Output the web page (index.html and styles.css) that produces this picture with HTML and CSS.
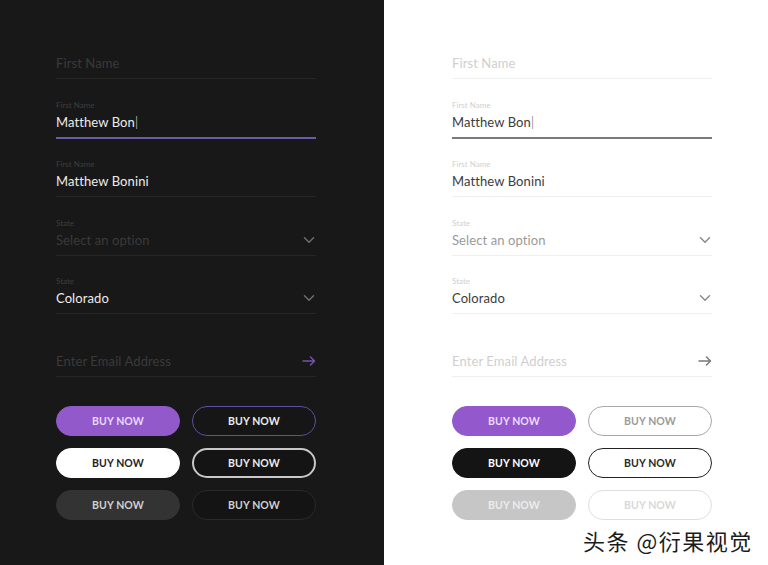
FILE: index.html
```html
<!DOCTYPE html>
<html>
<head>
<meta charset="utf-8">
<link rel="stylesheet" href="styles.css">
</head>
<body>
<div class="page">
  <section class="panel dark">
    <div class="form">
      <div class="field"><div class="label"></div><div class="value placeholder">First Name</div></div>
      <div class="field focus"><div class="label">First Name</div><div class="value">Matthew Bon<span class="caret">|</span></div></div>
      <div class="field"><div class="label">First Name</div><div class="value">Matthew Bonini</div></div>
      <div class="field"><div class="label">State</div><div class="value placeholder dim">Select an option<svg class="icon" viewBox="0 0 12 8"><path d="M1.5 1.8 6 6.2 10.5 1.8"/></svg></div></div>
      <div class="field"><div class="label">State</div><div class="value">Colorado<svg class="icon" viewBox="0 0 12 8"><path d="M1.5 1.8 6 6.2 10.5 1.8"/></svg></div></div>
      <div class="field email"><div class="label"></div><div class="value placeholder">Enter Email Address<svg class="icon arrow" viewBox="0 0 14 10"><path d="M1 5h11.5M8.5 1 12.5 5 8.5 9"/></svg></div></div>
    </div>
    <div class="buttons">
      <button class="btn b1">BUY NOW</button>
      <button class="btn b2">BUY NOW</button>
      <button class="btn b3">BUY NOW</button>
      <button class="btn b4">BUY NOW</button>
      <button class="btn b5">BUY NOW</button>
      <button class="btn b6">BUY NOW</button>
    </div>
  </section>
  <section class="panel light">
    <div class="form">
      <div class="field"><div class="label"></div><div class="value placeholder">First Name</div></div>
      <div class="field focus"><div class="label">First Name</div><div class="value">Matthew Bon<span class="caret">|</span></div></div>
      <div class="field"><div class="label">First Name</div><div class="value">Matthew Bonini</div></div>
      <div class="field"><div class="label">State</div><div class="value placeholder dim">Select an option<svg class="icon" viewBox="0 0 12 8"><path d="M1.5 1.8 6 6.2 10.5 1.8"/></svg></div></div>
      <div class="field"><div class="label">State</div><div class="value">Colorado<svg class="icon" viewBox="0 0 12 8"><path d="M1.5 1.8 6 6.2 10.5 1.8"/></svg></div></div>
      <div class="field email"><div class="label"></div><div class="value placeholder">Enter Email Address<svg class="icon arrow" viewBox="0 0 14 10"><path d="M1 5h11.5M8.5 1 12.5 5 8.5 9"/></svg></div></div>
    </div>
    <div class="buttons">
      <button class="btn b1">BUY NOW</button>
      <button class="btn b2">BUY NOW</button>
      <button class="btn b3">BUY NOW</button>
      <button class="btn b4">BUY NOW</button>
      <button class="btn b5">BUY NOW</button>
      <button class="btn b6">BUY NOW</button>
    </div>
  </section>
  <div class="watermark">头条 @衍果视觉</div>
</div>
</body>
</html>
```
FILE: styles.css
```css
* { box-sizing: border-box; }
html, body { margin: 0; padding: 0; }
body { width: 768px; height: 565px; overflow: hidden; font-family: Lato, "Noto Sans", sans-serif; }
.page { display: flex; width: 768px; height: 565px; position: relative; }
.panel { flex: 0 0 384px; height: 565px; padding: 40px 0 0 56px; }
.dark { background: #181818; }
.light { background: #ffffff; padding-left: 68px; }
.form { width: 260px; display: flex; flex-direction: column; gap: 19.5px; }
.field { height: 39px; border-bottom: 1px solid; display: flex; flex-direction: column; }
.field.email { margin-top: 4px; }
.label { height: 12px; font-size: 8px; line-height: 12px; }
.value { height: 22px; font-size: 13px; line-height: 22px; display: flex; align-items: center; justify-content: space-between; letter-spacing: 0.1px; }
.caret { font-weight: 300; margin-left: 0; margin-right: auto; }
.icon { width: 12px; height: 8px; fill: none; stroke-width: 1.5; stroke-linecap: round; stroke-linejoin: round; margin-right: 1px; }
.icon.arrow { width: 14px; height: 10px; margin-right: 0; }
.buttons { width: 260px; margin-top: 29px; display: grid; grid-template-columns: 124px 124px; column-gap: 12px; row-gap: 12px; }
.btn { height: 30px; border-radius: 15px; font-family: Lato, sans-serif; font-weight: 700; font-size: 10.5px; letter-spacing: 0.1px; border: 1.5px solid transparent; padding: 0; }

/* dark */
.dark .field { border-color: #262626; }
.dark .field.focus { border-bottom: 2px solid #6a5aa8; height: 40px; }
.dark .label { color: #3e3e3e; }
.dark .value { color: #ececec; }
.dark .placeholder { color: #3a3a3a; }
.dark .icon { stroke: #6e6e6e; }
.dark .icon.arrow { stroke: #7a4fae; }
.dark .b1 { background: #9159c9; color: #ead9fb; border-color: #9159c9; }
.dark .b2 { background: #161616; color: #ececec; border-color: #5e4fa0; }
.dark .b3 { background: #ffffff; color: #1e1e1e; border-color: #ffffff; }
.dark .b4 { background: #141414; color: #ececec; border-color: #c8c8c8; border-width: 2px; }
.dark .b5 { background: #333333; color: #d0d0d0; border-color: #333333; }
.dark .b6 { background: #141414; color: #d0d0d0; border-color: #2a2a2a; }

/* light */
.light .field { border-color: #efefef; }
.light .field.focus { border-bottom: 2px solid #7a7a7a; height: 40px; }
.light .label { color: #d0d0d0; }
.light .value { color: #3c3c3c; }
.light .placeholder { color: #cfcfcf; }
.light .placeholder.dim { color: #9a9a9a; }
.light .icon { stroke: #8a8a8a; }
.light .icon.arrow { stroke: #7a7a7a; }
.light .b1 { background: #9358cb; color: #ecdcfb; border-color: #9358cb; }
.light .b2 { background: #ffffff; color: #9a9a9a; border-color: #a8a8a8; }
.light .b3 { background: #141414; color: #ffffff; border-color: #141414; }
.light .b4 { background: #ffffff; color: #2a2a2a; border-color: #222222; }
.light .b5 { background: #c6c6c6; color: #ececec; border-color: #c6c6c6; }
.light .b6 { background: #ffffff; color: #d8d8d8; border-color: #dedede; }

.watermark { position: absolute; left: 583px; top: 526px; font-family: "Noto Sans CJK SC", sans-serif; font-size: 22px; line-height: 28px; color: #1c1c1c; text-shadow: 0 0 2px #fff, 0 0 2px #fff; letter-spacing: 1.5px; }
```
